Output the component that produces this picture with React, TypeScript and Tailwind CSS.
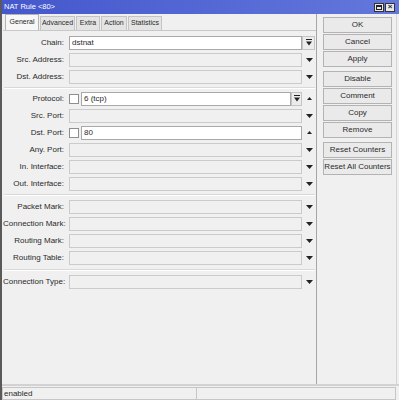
import React from 'react';

type Row =
  | { kind: 'field'; label: string; white?: boolean; check?: boolean; combo?: boolean; arrow: 'down' | 'up' | 'none' }
  | { kind: 'sep'; h: string };

const rows: Row[] = [
  { kind: 'field', label: 'Chain:', white: true, combo: true, arrow: 'none' },
  { kind: 'field', label: 'Src. Address:', arrow: 'down' },
  { kind: 'field', label: 'Dst. Address:', arrow: 'down' },
  { kind: 'sep', h: 'h-[5px]' },
  { kind: 'field', label: 'Protocol:', white: true, check: true, combo: true, arrow: 'up' },
  { kind: 'field', label: 'Src. Port:', arrow: 'down' },
  { kind: 'field', label: 'Dst. Port:', white: true, check: true, arrow: 'up' },
  { kind: 'field', label: 'Any. Port:', arrow: 'down' },
  { kind: 'field', label: 'In. Interface:', arrow: 'down' },
  { kind: 'field', label: 'Out. Interface:', arrow: 'down' },
  { kind: 'sep', h: 'h-[6px]' },
  { kind: 'field', label: 'Packet Mark:', arrow: 'down' },
  { kind: 'field', label: 'Connection Mark:', arrow: 'down' },
  { kind: 'field', label: 'Routing Mark:', arrow: 'down' },
  { kind: 'field', label: 'Routing Table:', arrow: 'down' },
  { kind: 'sep', h: 'h-[7px]' },
  { kind: 'field', label: 'Connection Type:', arrow: 'down' },
];

const values: Record<string, string> = {
  'Chain:': 'dstnat',
  'Protocol:': '6 (tcp)',
  'Dst. Port:': '80',
};

// small "line over triangle" glyph used on combo buttons
const ComboIcon = () => (
  <svg width="6" height="7" viewBox="0 0 6 7">
    <rect x="0" y="0" width="6" height="1" fill="#222" />
    <path d="M0 2.5 H6 L3 6.5 Z" fill="#222" />
  </svg>
);

const Arrow = ({ dir }: { dir: 'down' | 'up' }) => (
  <div className="w-[14px] flex items-center justify-center">
    {dir === 'down' ? (
      <svg width="7" height="4" viewBox="0 0 7 4">
        <path d="M0 0 H7 L3.5 4 Z" fill="#222" />
      </svg>
    ) : (
      <svg width="5" height="3" viewBox="0 0 5 3">
        <path d="M0 3 H5 L2.5 0 Z" fill="#222" />
      </svg>
    )}
  </div>
);

const buttons = [
  ['OK', 'Cancel', 'Apply'],
  ['Disable', 'Comment', 'Copy', 'Remove'],
  ['Reset Counters', 'Reset All Counters'],
];

export default function App() {
  return (
    <div className="w-[399px] h-[400px] bg-[#f0f0f0] flex flex-col border-l-2 border-[#5a5a5a] font-['Liberation_Sans',Arial,sans-serif] text-[8px] text-[#2a2a2a] overflow-hidden">
      {/* Title bar */}
      <div className="h-[14px] flex items-center justify-between pl-[2px] pr-[4px] bg-gradient-to-r from-[#4457cc] to-[#6477dc]">
        <span className="text-white text-[7.5px]">NAT Rule &lt;80&gt;</span>
        <div className="flex gap-[1px]">
          <div className="w-[10px] h-[9px] bg-[#e8e8e8] border border-[#333] flex items-center justify-center">
            <div className="w-[6px] h-[5px] border border-[#222] border-t-2" />
          </div>
          <div className="w-[10px] h-[9px] bg-[#e8e8e8] border border-[#333] flex items-center justify-center text-[8px] font-bold leading-none">
            ×
          </div>
        </div>
      </div>

      <div className="flex-1 flex">
        {/* Left: tabs + form */}
        <div className="w-[314px] flex flex-col pl-[1px]">
          <div className="h-[16px] flex items-end pl-[2px] text-[7px]">
            <div className="h-[16px] w-[34px] flex items-center justify-center bg-[#f7f7f7] border border-b-0 border-[#b4b4b4]">General</div>
            <div className="h-[14px] w-[35px] ml-[1px] flex items-center justify-center bg-[#e4e4e4] border border-b-0 border-[#c4c4c4]">Advanced</div>
            <div className="h-[14px] w-[24px] ml-[1px] flex items-center justify-center bg-[#e4e4e4] border border-b-0 border-[#c4c4c4]">Extra</div>
            <div className="h-[14px] w-[26px] ml-[1px] flex items-center justify-center bg-[#e4e4e4] border border-b-0 border-[#c4c4c4]">Action</div>
            <div className="h-[14px] w-[34px] ml-[1px] flex items-center justify-center bg-[#e4e4e4] border border-b-0 border-[#c4c4c4]">Statistics</div>
          </div>
          <div className="flex-1 border-t border-[#c8c8c8] pt-[3px] flex flex-col">
            {rows.map((r, i) =>
              r.kind === 'sep' ? (
                <div key={i} className={`${r.h} flex flex-col justify-center mx-[1px]`}>
                  <div className="h-[1px] bg-[#d9d9d9]" />
                  <div className="h-[1px] bg-white" />
                </div>
              ) : (
                <div key={i} className="h-[17px] flex items-center">
                  <div className="w-[62px] text-right pr-[1px] whitespace-nowrap">{r.label}</div>
                  <div className="w-[4px]" />
                  {r.check && <div className="w-[10px] h-[10px] bg-white border border-[#8f8f8f] mr-[2px]" />}
                  <div
                    className={`flex-1 h-[14px] flex items-center px-[2px] border ${
                      r.white ? 'bg-white border-[#a9a9a9]' : 'bg-[#f0f0f0] border-[#cbcbcb]'
                    }`}
                  >
                    {values[r.label] ?? ''}
                  </div>
                  {r.combo && (
                    <div
                      className={`${r.arrow === 'none' ? 'w-[13px] mr-[1px]' : 'w-[11px]'} h-[14px] bg-[#ececec] border border-[#c4c4c4] flex items-center justify-center`}
                    >
                      <ComboIcon />
                    </div>
                  )}
                  {r.arrow !== 'none' && <Arrow dir={r.arrow} />}
                </div>
              )
            )}
          </div>
        </div>

        {/* Right: buttons */}
        <div className="flex-1 border-l border-[#a6a6a6] border-r border-r-[#d6d6d6] mr-[2px] pt-[3px] pl-[6px] pr-[4px] flex flex-col gap-[4px]">
          {buttons.map((g, gi) => (
            <div key={gi} className="flex flex-col gap-[1px]">
              {g.map((b) => (
                <div
                  key={b}
                  className="h-[16px] flex items-center justify-center bg-[#eaeaea] border border-[#b3b3b3] whitespace-nowrap"
                >
                  {b}
                </div>
              ))}
            </div>
          ))}
        </div>
      </div>

      {/* Status bar */}
      <div className="h-[16px] border-t-2 border-[#d2d2d2] flex pt-[1px] pr-[3px]">
        <div className="w-[195px] border border-[#c6c6c6] pl-[1px] flex items-center">enabled</div>
        <div className="flex-1 border border-l-0 border-[#c6c6c6]" />
      </div>
    </div>
  );
}
